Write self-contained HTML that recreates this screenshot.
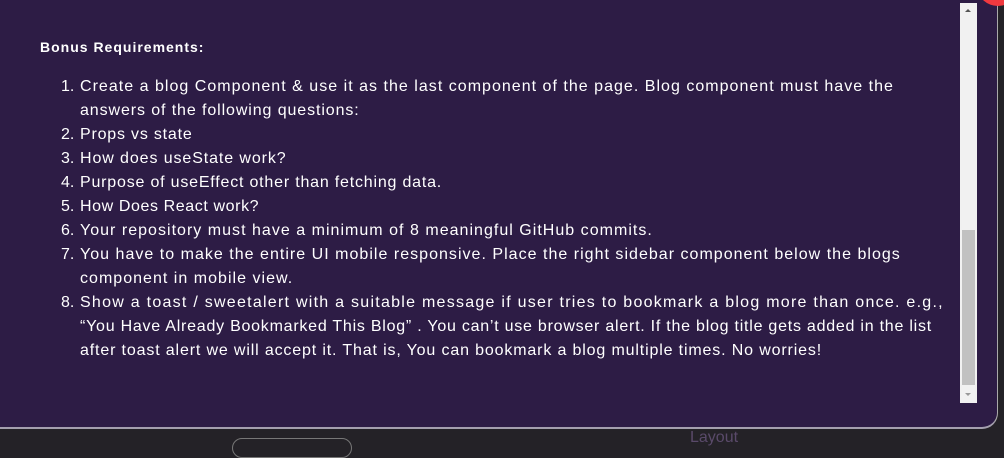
<!DOCTYPE html>
<html><head><meta charset="utf-8"><style>
*{margin:0;padding:0;box-sizing:border-box}
body{width:1004px;height:445px;background:#242227;overflow:hidden;position:relative;font-family:"Liberation Sans",sans-serif}
.panel{position:absolute;left:-10px;top:-20px;width:1008px;height:449px;background:#2d1c45;border-right:1px solid #aaa;border-bottom:2px solid #a49fae;border-bottom-right-radius:16px}
.h{position:absolute;left:40px;top:39px;color:#fff;font-weight:bold;font-size:14px;letter-spacing:1px}
.l{position:absolute;color:#fff;font-size:16px;letter-spacing:1.02px;white-space:nowrap;line-height:24px}
.n{position:absolute;left:61px;letter-spacing:0}
.t{position:absolute;left:80px}
.sb{position:absolute;left:960px;top:3px;width:17px;height:400px;background:#f1f1f1}
.th{position:absolute;left:962px;top:230px;width:13px;height:155px;background:#c1c1c1}
.red{position:absolute;left:978px;top:-30px;width:40px;height:36px;border-radius:50%;background:#f0393f}
</style></head><body>
<div class="panel"></div>
<div class="red"></div>
<div class="sb"></div><div class="th"></div>
<div style="position:absolute;left:965px;top:9px;width:0;height:0;border-left:3px solid transparent;border-right:3px solid transparent;border-bottom:3px solid #555"></div>
<div style="position:absolute;left:965px;top:393px;width:0;height:0;border-left:3px solid transparent;border-right:3px solid transparent;border-top:3px solid #999"></div>
<div style="position:absolute;left:232px;top:438px;width:120px;height:20px;border:1px solid #777;border-radius:10px"></div>
<div style="position:absolute;left:690px;top:429px;color:#5a4a6a;font-size:16px">Layout</div>
<div class="h">Bonus Requirements:</div>
<div class="l n" style="top:75px">1.</div><div class="l t" style="top:75px">Create a blog Component &amp; use it as the last component of the page. Blog component must have the</div>
<div class="l t" style="top:99px;letter-spacing:0.9px">answers of the following questions:</div>
<div class="l n" style="top:123px">2.</div><div class="l t" style="top:123px;letter-spacing:0.8px">Props vs state</div>
<div class="l n" style="top:147px">3.</div><div class="l t" style="top:147px;letter-spacing:0.9px">How does useState work?</div>
<div class="l n" style="top:171px">4.</div><div class="l t" style="top:171px;letter-spacing:0.8px">Purpose of useEffect other than fetching data.</div>
<div class="l n" style="top:195px">5.</div><div class="l t" style="top:195px;letter-spacing:0.6px">How Does React work?</div>
<div class="l n" style="top:219px">6.</div><div class="l t" style="top:219px">Your repository must have a minimum of 8 meaningful GitHub commits.</div>
<div class="l n" style="top:243px">7.</div><div class="l t" style="top:243px">You have to make the entire UI mobile responsive. Place the right sidebar component below the blogs</div>
<div class="l t" style="top:267px">component in mobile view.</div>
<div class="l n" style="top:291px">8.</div><div class="l t" style="top:291px;letter-spacing:1.26px">Show a toast / sweetalert with a suitable message if user tries to bookmark a blog more than once. e.g.,</div>
<div class="l t" style="top:315px;letter-spacing:0.76px">“You Have Already Bookmarked This Blog” . You can’t use browser alert. If the blog title gets added in the list</div>
<div class="l t" style="top:339px;letter-spacing:0.85px">after toast alert we will accept it. That is, You can bookmark a blog multiple times. No worries!</div>
</body></html>
